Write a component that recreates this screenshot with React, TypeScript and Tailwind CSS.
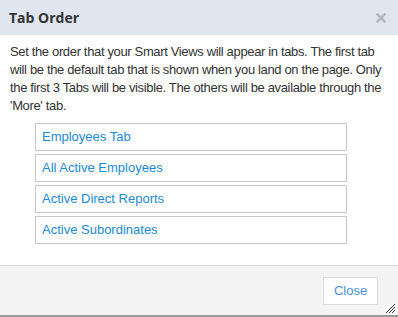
const tabs = [
  "Employees Tab",
  "All Active Employees",
  "Active Direct Reports",
  "Active Subordinates",
];

/** Tab order dialog. */
export default function App() {
  return (
    <div
      className="flex h-[317px] w-[398px] flex-col overflow-hidden bg-white"
      style={{ fontFamily: '"Liberation Sans", Arial, sans-serif' }}
    >
      <header className="flex h-[35px] shrink-0 items-center justify-between bg-[#dfe6f0] pl-[9px] pr-[12px]">
        <h1
          className="text-[14px] font-bold text-[#333]"
          style={{ fontFamily: '"Open Sans", sans-serif' }}
        >
          Tab Order
        </h1>
        <svg width="10" height="10" viewBox="0 0 10 10">
          <path
            d="M1.5 1.5 L8.5 8.5 M8.5 1.5 L1.5 8.5"
            stroke="#b4b8bd"
            strokeWidth="2.6"
            strokeLinecap="square"
          />
        </svg>
      </header>
      <div className="flex-1 px-[10px] pt-[8px]">
        <p className="text-[13px] leading-[18px] tracking-[-0.35px] text-[#333]">
          Set the order that your Smart Views will appear in tabs. The first tab
          will be the default tab that is shown when you land on the page. Only
          the first 3 Tabs will be visible. The others will be available through
          the 'More' tab.
        </p>
        <ul className="mt-[8px] ml-[25px] flex w-[312px] flex-col gap-[3px]">
          {tabs.map((tab) => (
            <li
              key={tab}
              className="flex h-[28px] items-center border border-[#c8c8c8] px-[6px] text-[13px] text-[#1b8ad6]"
            >
              {tab}
            </li>
          ))}
        </ul>
      </div>
      <footer className="relative flex h-[52px] shrink-0 items-start justify-end border-t border-[#dcdcdc] border-b-2 border-b-[#9a9a9a] bg-[#f4f4f4] pr-[20px] pt-[11px]">
        <button
          type="button"
          className="h-[28px] w-[55px] border border-[#dcdcdc] bg-white text-[13px] text-[#4a90e2]"
        >
          Close
        </button>
        <svg
          width="11"
          height="11"
          viewBox="0 0 11 11"
          className="absolute bottom-[1px] right-[2px]"
        >
          <path d="M1 10 L10 1 M4 10 L10 4 M7 10 L10 7" stroke="#333" strokeWidth="1" />
        </svg>
      </footer>
    </div>
  );
}
